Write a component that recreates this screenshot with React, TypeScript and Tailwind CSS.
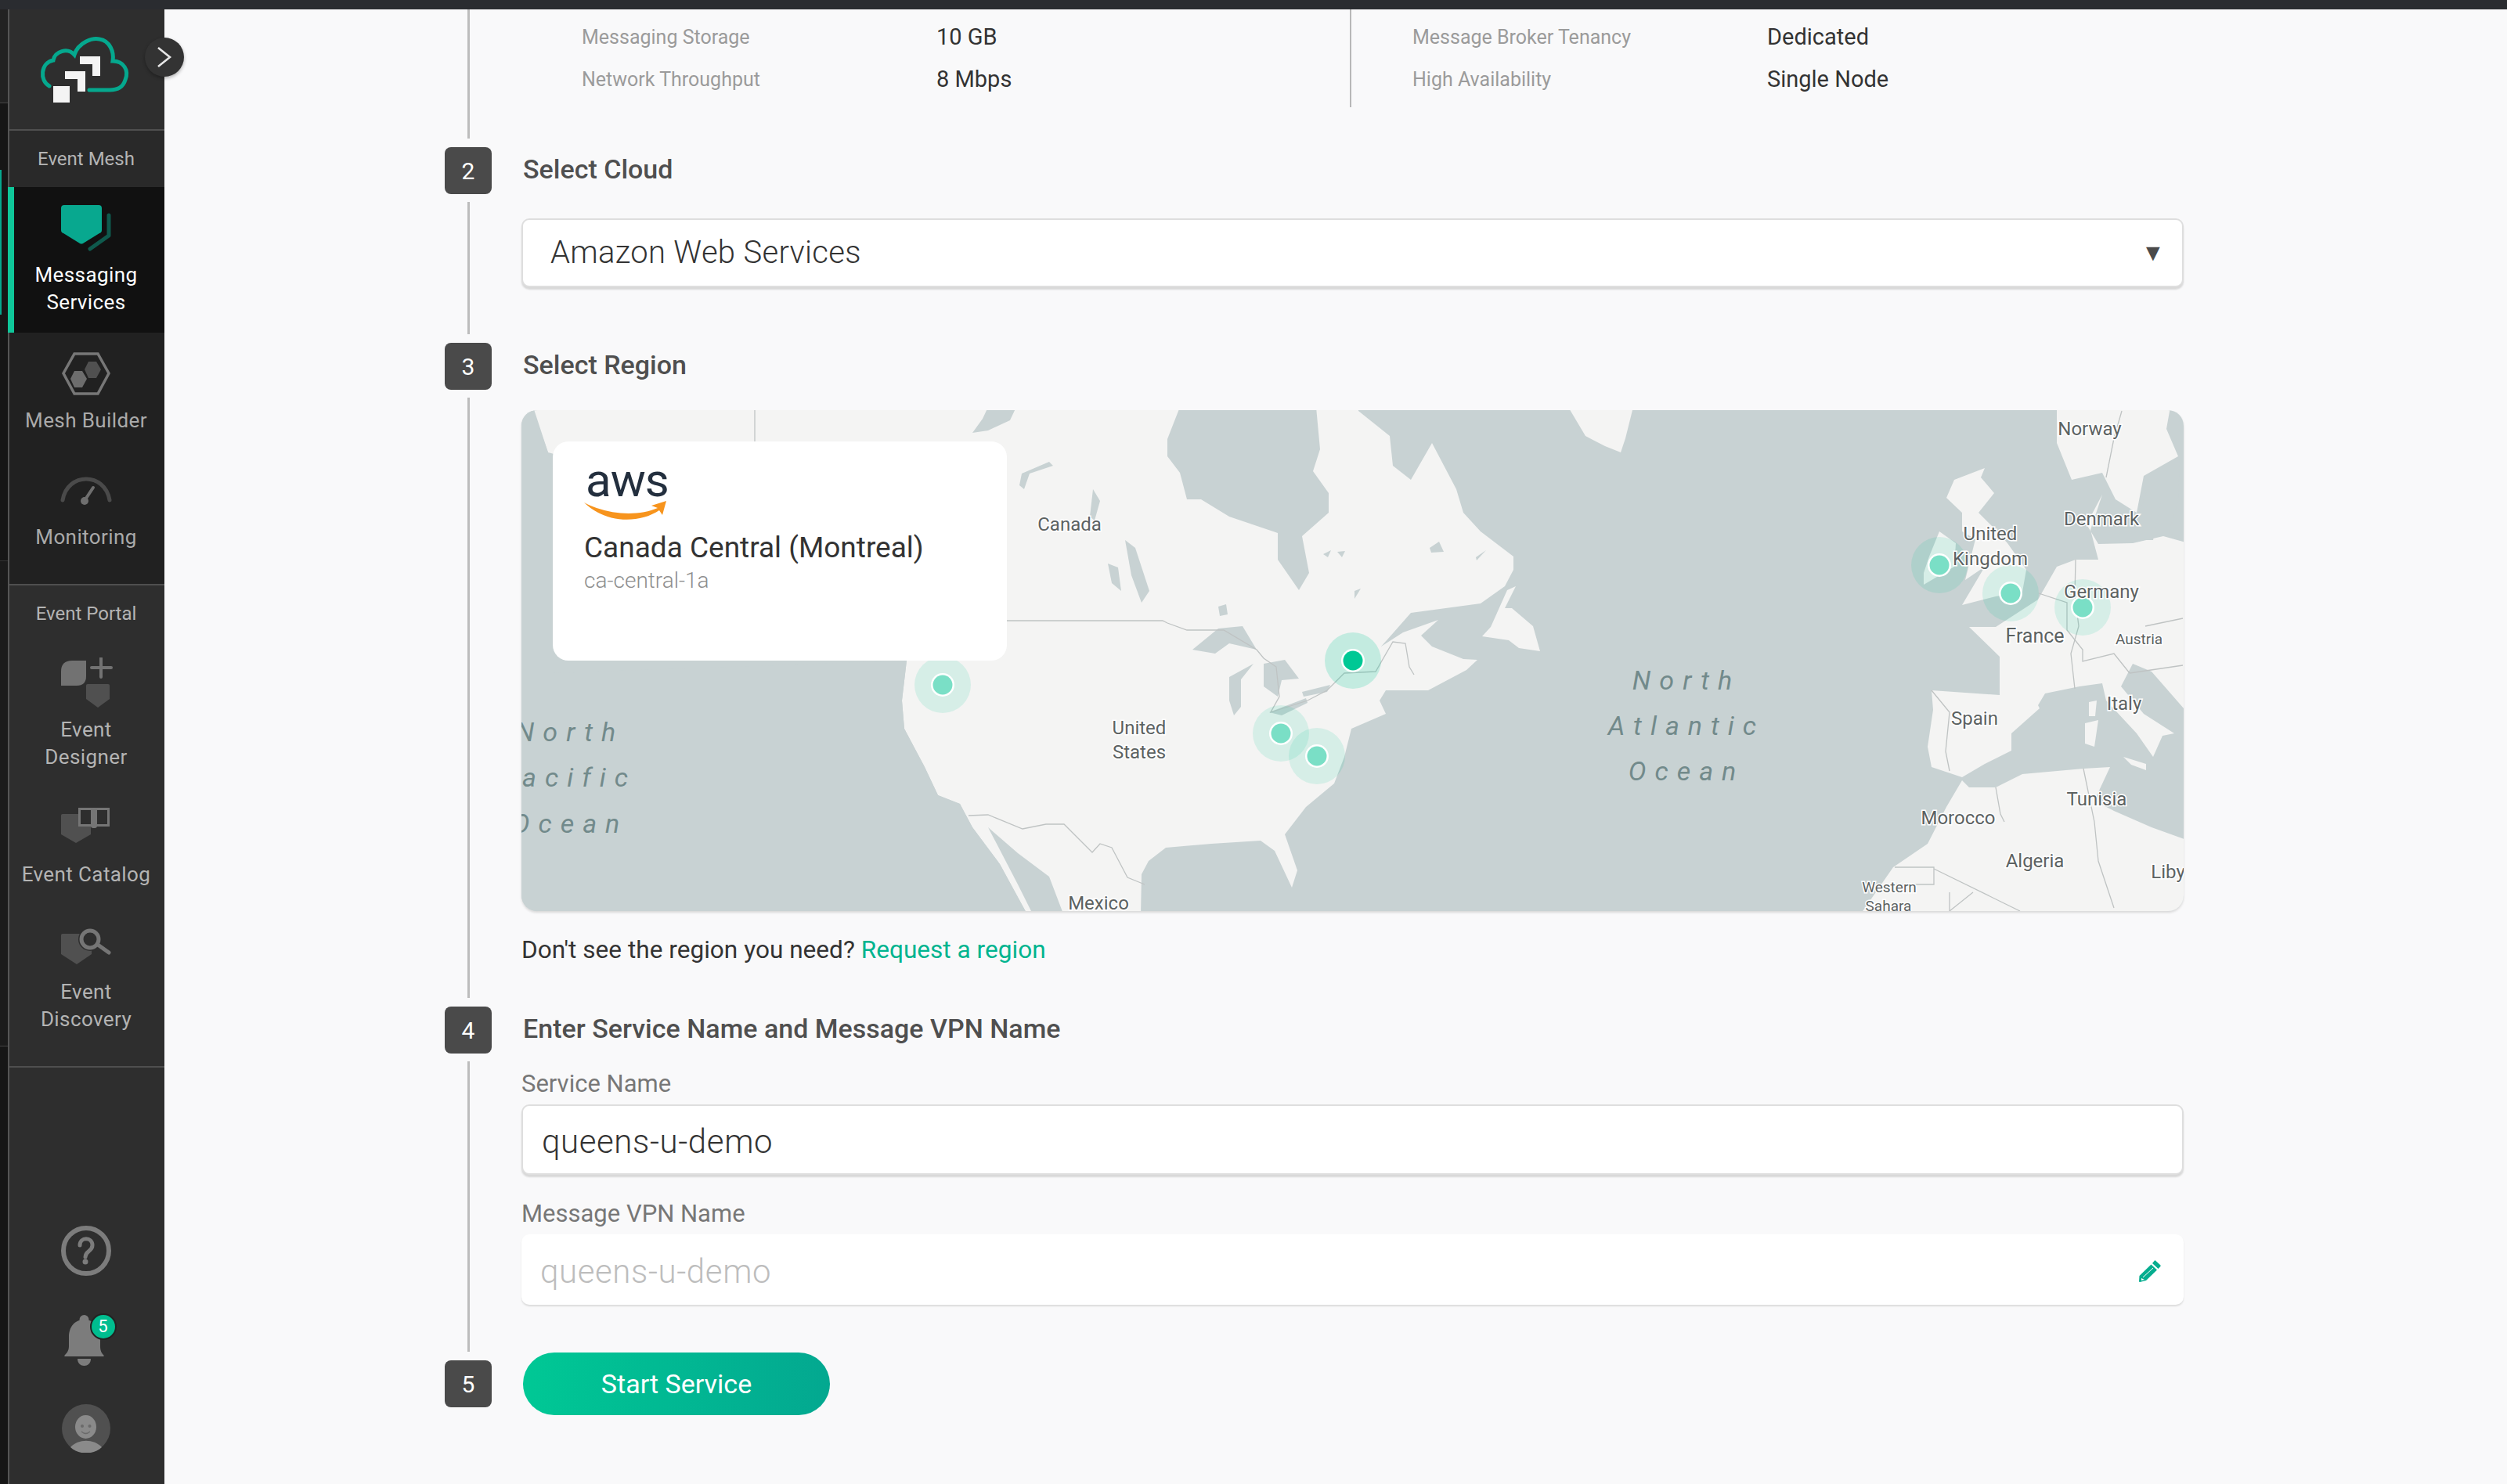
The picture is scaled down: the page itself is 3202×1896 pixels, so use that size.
import React from 'react'

// land outlines are written in page pixels, the map's viewBox starts at 666,524
const land = [
  // north america
  '660,500 1735,500 1735,525 1775,557 1779,595 1802,613 1829,566 1860,625 1869,655 1891,679 1933,711 1933,728 1922,749 1891,771 1802,783 1764,826 1792,808 1837,792 1815,812 1829,826 1869,842 1887,843 1873,856 1824,882 1770,882 1762,895 1770,912 1726,931 1717,967 1704,1001 1668,1031 1641,1066 1657,1112 1650,1134 1628,1087 1610,1074 1547,1078 1489,1083 1467,1100 1458,1117 1457,1170 1359,1170 1340,1120 1300,1090 1262,1057 1300,1130 1320,1170 1313,1170 1277,1104 1242,1057 1226,1027 1198,1016 1181,980 1155,931 1152,895 1158,844 1160,700 700,578 681,525',
  // newfoundland
  '1893,813 1904,801 1925,754 1936,749 1922,777 1931,777 1958,800 1967,832 1940,828 1927,818',
  // greenland
  '2003,520 2025,557 2050,570 2070,578 2076,560 2086,520',
  // ireland
  '2464,711 2477,679 2498,694 2496,724 2457,747 2457,732',
  // great britain
  '2535,598 2496,613 2486,636 2506,655 2506,679 2523,689 2510,741 2535,724 2506,773 2549,762 2583,756 2588,728 2564,694 2544,672 2527,655 2547,630 2530,610',
  // europe
  '2515,801 2549,801 2603,766 2627,724 2651,715 2680,715 2670,677 2685,632 2665,670 2680,695 2724,694 2763,685 2795,694 2795,912 2748,858 2724,848 2709,877 2738,912 2777,937 2762,940 2750,967 2729,937 2690,895 2685,873 2656,877 2612,886 2603,901 2605,905 2569,937 2569,959 2535,976 2506,993 2467,980 2462,954 2469,907 2467,882 2554,888 2554,839',
  // scandinavia
  '2627,520 2627,566 2646,613 2685,604 2702,638 2729,655 2738,608 2782,583 2767,548 2772,520',
  // africa
  '2506,997 2515,1006 2549,1006 2583,989 2661,982 2695,980 2675,1023 2700,1036 2748,1057 2795,1074 2795,1170 2375,1170 2418,1108 2462,1078 2486,1031',
  // sicily, sardinia, corsica
  '2712,967 2741,976 2741,984 2722,977',
  '2663,924 2680,920 2675,954 2663,950',
  '2668,897 2678,895 2676,915 2668,915',
]

const water = [
  // hudson bay
  '1507,520 1681,520 1686,574 1677,602 1697,630 1697,655 1663,685 1672,732 1659,754 1632,715 1632,681 1570,660 1534,638 1516,638 1507,604 1491,583 1491,561',
  // arctic inlet
  '1242,553 1255,535 1262,520 1298,520 1290,537 1262,550',
  '665,520 681,520 700,578 706,600 706,860 1158,844 1152,895 1155,931 1181,980 1198,1016 1226,1027 1242,1057 1277,1104 1313,1170 660,1170',
  // great lakes
  '1523,830 1556,803 1587,800 1605,830 1570,822 1552,835',
  '1570,865 1601,848 1585,868 1585,903 1576,914 1570,895',
  '1614,848 1641,843 1659,867 1637,869 1632,890 1614,877',
  '1621,910 1668,892 1670,898 1637,914',
  '1663,884 1699,875 1695,884 1665,890',
  // prairie lakes and small bodies
  '1305,605 1340,590 1345,595 1315,605 1308,625 1302,620',
  '1437,690 1450,700 1468,755 1458,770 1445,735',
  '1415,720 1428,725 1432,755 1420,745',
  '1396,625 1405,640 1398,665 1392,660',
  '1556,775 1566,772 1568,785 1558,787',
  '1690,708 1700,703 1696,712',
  '1708,705 1718,704 1714,712',
  '1826,700 1838,692 1844,705 1828,706',
  '1885,712 1898,703 1886,716',
  '1730,755 1738,752 1730,765',
  // baltic
  '2730,660 2745,620 2760,640 2750,690 2735,690',
  '2784,583 2795,583 2795,694 2770,680 2782,640',
]

const borders = [
  '1286,793 1485,793 1491,796 1516,805 1563,805 1605,830 1614,841 1630,852 1634,890 1623,910 1670,895 1695,882 1717,860 1757,858 1779,820 1795,822 1800,852 1806,862',
  '964,524 964,564',
  '1237,1042 1262,1041 1306,1059 1336,1053 1359,1053 1395,1089 1405,1078 1420,1083 1440,1121 1462,1130',
  '2604,758 2640,770 2640,805 2660,830 2660,845 2700,835 2720,860',
  '2651,715 2650,760 2655,800 2645,835 2650,880',
  '2467,882 2490,910 2485,960 2490,985',
  '2549,1006 2555,1040 2560,1050',
  '2661,982 2675,1050 2680,1100 2700,1160',
  '2420,1108 2470,1108 2470,1130 2420,1130',
  '2470,1110 2580,1164',
  '2490,1140 2490,1164 2520,1140',
  '2720,860 2788,850',
  '2740,800 2788,790',
  '2690,610 2700,560 2710,525',
]

const placeLabels: [string, number, number, number?][] = [
  ['Canada', 1366, 678],
  ['United', 1455, 938],
  ['States', 1455, 969],
  ['Mexico', 1403, 1162],
  ['Norway', 2669, 556],
  ['Denmark', 2684, 671],
  ['United', 2542, 690],
  ['Kingdom', 2542, 722],
  ['Germany', 2684, 764],
  ['France', 2599, 821, 25],
  ['Austria', 2732, 823, 19],
  ['Italy', 2713, 907],
  ['Spain', 2522, 926],
  ['Tunisia', 2678, 1029],
  ['Morocco', 2501, 1053],
  ['Algeria', 2599, 1108],
  ['Liby', 2769, 1122],
  ['Western', 2413, 1140, 19],
  ['Sahara', 2412, 1164, 19],
]

const oceanLabels: [string, number, number][] = [
  ['North', 728, 947],
  ['acific', 740, 1005],
  ['Ocean', 728, 1064],
  ['North', 2154, 881],
  ['Atlantic', 2154, 939],
  ['Ocean', 2154, 997],
]

const pins: [number, number, boolean][] = [
  [1204, 875, false],
  [1636, 937, false],
  [1682, 966, false],
  [2477, 722, false],
  [2568, 758, false],
  [2660, 776, false],
  [1728, 844, true],
]

const MapDrawing = () => (
  <svg viewBox="666 524 2123 640" className="block w-full h-full">
    <rect x="666" y="524" width="2123" height="640" fill="#c8d2d3" />
    {land.map((p, i) => <polygon key={`land-${i}`} points={p} fill="#f4f4f3" />)}
    {water.map((p, i) => <polygon key={`water-${i}`} points={p} fill="#c8d2d3" />)}
    {borders.map((p, i) => <polyline key={`border-${i}`} points={p} fill="none" stroke="#bfc3c3" strokeWidth="1.3" />)}
    {pins.map(([x, y, active]) => (
      <g key={`${x}-${y}`}>
        <circle cx={x} cy={y} r="36" fill="#00c895" fillOpacity={active ? 0.2 : 0.12} />
        <circle cx={x} cy={y} r="15" fill="#fff" />
        <circle cx={x} cy={y} r="12.5" fill={active ? '#00c895' : '#7adfc6'} />
      </g>
    ))}
    {placeLabels.map(([t, x, y, size]) => (
      <text
        key={`${t}-${x}`}
        x={x}
        y={y}
        textAnchor="middle"
        fontFamily="Roboto, sans-serif"
        fontSize={size ?? 24}
        fill="#5c6262"
        stroke="#ffffff"
        strokeWidth="3"
        paintOrder="stroke"
      >
        {t}
      </text>
    ))}
    {oceanLabels.map(([t, x, y]) => (
      <text
        key={`${t}-${x}-${y}`}
        x={x}
        y={y}
        textAnchor="middle"
        fontFamily="Roboto, sans-serif"
        fontStyle="italic"
        fontSize="34"
        letterSpacing="11"
        fill="#728a8b"
      >
        {t}
      </text>
    ))}
  </svg>
)

const AwsLogo = () => (
  <div className="flex flex-col items-start">
    <span className="h-[40px] ml-[2px] text-[60px] leading-[40px] font-normal tracking-[-1px] text-[#232f3e]">aws</span>
    <svg viewBox="746 640 106 24" className="w-[106px] h-[24px] mt-[6px]">
      <path d="M746 642 C775 658 815 660 840 649 L832 646 L851 640 L846 658 L842 652 C815 670 772 668 746 642 Z" fill="#f7941d" />
    </svg>
  </div>
)

const Logo = () => (
  <svg viewBox="50 46 118 92" className="w-[118px] h-[92px]">
    <path
      d="M63 112 C50 105 52 82 68 79 C70 68 86 62 95 72 C100 56 118 50 127 52 C140 54 146 68 144 80 C158 80 165 92 160 104 C157 114 150 117 140 117 L114 117"
      fill="none"
      stroke="#05a88e"
      strokeWidth="5"
      strokeLinecap="round"
    />
    <rect x="68" y="112" width="21" height="21" fill="#f4f4f4" />
    <path d="M83 93 H109 V119 H99 V103 H83 Z" fill="#f4f4f4" />
    <path d="M102 74 H128 V99 H118 V84 H102 Z" fill="#f4f4f4" />
  </svg>
)

const MessagingIcon = () => (
  <svg viewBox="76 260 68 62" className="w-[68px] h-[62px]">
    <path d="M82 262 H126 Q130 262 130 266 V294 Q130 297 127 298 L106 311 Q104 312 102 311 L81 298 Q78 297 78 294 V266 Q78 262 82 262 Z" fill="#08a88f" />
    <path d="M139 275 V301 L115 318" fill="none" stroke="#0f5a4d" strokeWidth="5" strokeLinecap="round" strokeLinejoin="round" />
  </svg>
)

const MeshIcon = () => (
  <svg viewBox="76 448 68 59" className="w-[68px] h-[59px]">
    <polygon points="95,452 125,452 139,477 125,503 95,503 81,477" fill="none" stroke="#777" strokeWidth="3.5" />
    <polygon points="95,474 105,474 111,484 105,495 95,495 90,484" fill="#6d6d6d" />
    <polygon points="113,462 123,462 129,472 123,483 113,483 108,472" fill="#505050" />
  </svg>
)

const GaugeIcon = () => (
  <svg viewBox="76 606 68 40" className="w-[68px] h-[40px]">
    <path d="M80 639 C86 603 134 603 140 639" fill="none" stroke="#4a4a4a" strokeWidth="5" strokeLinecap="round" />
    <path d="M109 638 L119 623" stroke="#6f6f6f" strokeWidth="4" strokeLinecap="round" />
    <circle cx="108" cy="640" r="5" fill="#6f6f6f" />
  </svg>
)

const DesignerIcon = () => (
  <svg viewBox="76 840 68 66" className="w-[68px] h-[66px]">
    <path d="M92 844 H110 V864 Q110 876 98 876 H78 V858 Q78 844 92 844 Z" fill="#727272" />
    <path d="M117 853 H142 M129 841 V865" stroke="#727272" strokeWidth="4" strokeLinecap="round" />
    <path d="M112 874 H138 Q140 874 140 876 V893 L125 904 L110 893 V876 Q110 874 112 874 Z" fill="#505050" />
  </svg>
)

const CatalogIcon = () => (
  <svg viewBox="76 1030 68 49" className="w-[68px] h-[49px]">
    <path d="M80 1040 H116 V1066 L97 1077 L78 1066 V1042 Q78 1040 80 1040 Z" fill="#505050" />
    <rect x="101.5" y="1033.5" width="17" height="21" fill="#2e2e2e" stroke="#757575" strokeWidth="3" />
    <rect x="121.5" y="1033.5" width="17" height="21" fill="#2e2e2e" stroke="#757575" strokeWidth="3" />
    <rect x="116" y="1032" width="8" height="26" rx="3" fill="#757575" />
  </svg>
)

const DiscoveryIcon = () => (
  <svg viewBox="76 1184 68 50" className="w-[68px] h-[50px]">
    <path d="M80 1193 H117 V1219 L98 1232 L78 1219 V1195 Q78 1193 80 1193 Z" fill="#505050" />
    <circle cx="115" cy="1200" r="15" fill="#2e2e2e" />
    <circle cx="115" cy="1200" r="11" fill="#2e2e2e" stroke="#757575" strokeWidth="5" />
    <path d="M125 1207 L139 1217" stroke="#757575" strokeWidth="5" strokeLinecap="round" />
  </svg>
)

const HelpIcon = () => (
  <svg viewBox="76 1564 68 68" className="w-[68px] h-[68px]">
    <circle cx="110" cy="1598" r="29" fill="none" stroke="#7c7c7c" strokeWidth="6" />
    <path d="M102 1591 C102 1580 118 1580 118 1591 C118 1599 109 1598 109 1606" fill="none" stroke="#7c7c7c" strokeWidth="5" strokeLinecap="round" />
    <circle cx="109" cy="1612" r="3.5" fill="#7c7c7c" />
  </svg>
)

const BellIcon = () => (
  <svg viewBox="80 1678 60 68" className="w-[60px] h-[68px]">
    <circle cx="108.5" cy="1686" r="6" fill="#7c7c7c" />
    <path d="M108.5 1686 C96 1686 89 1696 89 1708 V1720 C89 1726 86 1729 84 1731 Q82 1733 85 1733 H132 Q135 1733 133 1731 C131 1729 129 1726 129 1720 V1708 C129 1696 121 1686 108.5 1686 Z" fill="#7c7c7c" />
    <path d="M100 1736 H117 C117 1748 100 1748 100 1736 Z" fill="#7c7c7c" />
  </svg>
)

const AvatarIcon = () => (
  <svg viewBox="78 1794 64 62" className="w-[64px] h-[62px]">
    <circle cx="110" cy="1825" r="31" fill="#505050" />
    <ellipse cx="109.5" cy="1823" rx="13.5" ry="15" fill="#8a8a8a" />
    <circle cx="105" cy="1822" r="2" fill="#6a6a6a" />
    <circle cx="114.5" cy="1822" r="2" fill="#6a6a6a" />
    <path d="M104 1829 Q109.5 1834 115 1829" fill="none" stroke="#6a6a6a" strokeWidth="1.2" />
    <path d="M90 1849 C100 1838 120 1838 130 1849 C120 1859 100 1859 90 1849 Z" fill="#8a8a8a" />
  </svg>
)

const NavLabel = ({ children, className = '' }: { children: React.ReactNode; className?: string }) => (
  <div className={`text-[26px] leading-[35px] tracking-[0.4px] text-center ${className}`}>{children}</div>
)

const Sidebar = () => (
  <aside className="relative flex h-full shrink-0">
    <div className="flex flex-col w-[12px] border-r-2 border-[#555] bg-[#161616]">
      <div className="h-[120px] bg-[#222] border-b border-[#444]" />
      <div className="relative h-[585px] border-b border-[#333]">
        <div className="absolute left-0 top-[85px] w-[2px] h-[185px] bg-[#05a88e]" />
      </div>
      <div className="h-[620px] bg-[#1b1b1b] border-b border-[#444]" />
    </div>
    <div className="flex flex-col w-[198px] bg-[#2e2e2e] text-[#b4b4b4]">
      <div className="flex h-[155px] shrink-0 items-center justify-center pr-[2px] border-b-2 border-[#4f4f4f]">
        <div className="mt-[2px] pr-[2px]"><Logo /></div>
      </div>

      <div className="h-[72px] shrink-0 flex items-center justify-center pr-[2px] bg-[#292929] text-[24px]">Event Mesh</div>
      <div className="flex flex-col items-center h-[186px] shrink-0 -ml-[2px] border-l-[8px] border-[#0fc79a] pr-[8px] pt-[21px] bg-[#111] text-white">
        <MessagingIcon />
        <NavLabel className="mt-[12px]">Messaging<br />Services</NavLabel>
      </div>
      <div className="flex flex-col items-center h-[321px] shrink-0 pr-[2px] pt-[23px] bg-[#212121] text-[#aaa]">
        <MeshIcon />
        <NavLabel className="mt-[13px]">Mesh Builder</NavLabel>
        <div className="mt-[51px]"><GaugeIcon /></div>
        <NavLabel className="mt-[23px]">Monitoring</NavLabel>
      </div>

      <div className="flex flex-col items-center shrink-0 h-[616px] pr-[2px] border-t-2 border-[#4f4f4f]">
        <div className="h-[72px] flex items-center text-[24px]">Event Portal</div>
        <div className="mt-[20px]"><DesignerIcon /></div>
        <NavLabel className="mt-[9px]">Event<br />Designer</NavLabel>
        <div className="mt-[45px]"><CatalogIcon /></div>
        <NavLabel className="mt-[21px]">Event Catalog</NavLabel>
        <div className="mt-[49px]"><DiscoveryIcon /></div>
        <NavLabel className="mt-[16px]">Event<br />Discovery</NavLabel>
      </div>

      <div className="flex flex-1 flex-col items-center pr-[2px] border-t-2 border-[#4f4f4f]">
        <div className="mt-[200px]"><HelpIcon /></div>
        <div className="relative mt-[46px] ml-[-3px]">
          <BellIcon />
          <div className="absolute left-[36px] top-0 w-[34px] h-[34px] flex items-center justify-center rounded-full bg-[#00bd8f] border-2 border-[#222] text-white text-[22px] leading-none">5</div>
        </div>
        <div className="mt-[48px]"><AvatarIcon /></div>
      </div>
    </div>
    {/* collapse toggle sits over the sidebar edge */}
    <button className="absolute left-[185px] top-[36px] flex w-[50px] h-[50px] items-center justify-center rounded-full bg-[#333] shadow-[0_2px_4px_rgba(0,0,0,0.3)]">
      <svg viewBox="0 0 20 28" className="w-[20px] h-[28px]">
        <polyline points="2,2 17,14 2,26" fill="none" stroke="#e6e6e6" strokeWidth="2.6" />
      </svg>
    </button>
  </aside>
)

const StepBadge = ({ n }: { n: number }) => (
  <div className="flex h-[60px] w-[60px] shrink-0 items-center justify-center rounded-[8px] bg-[#4a4a4a] text-[30px] text-white">{n}</div>
)

const Rail = ({ className = '' }: { className?: string }) => <div className={`w-[3px] bg-[#bcbcbc] ${className}`} />

const Heading = ({ children }: { children: React.ReactNode }) => (
  <h2 className="h-[60px] pl-[2px] pb-[3px] flex items-center text-[34px] font-medium text-[#4f4f4f]">{children}</h2>
)

const Step = ({ n, height, children }: { n: number; height: string; children: React.ReactNode }) => (
  <section className={`flex ${height}`}>
    <div className="flex w-[60px] shrink-0 flex-col items-center">
      <StepBadge n={n} />
      <Rail className="flex-1 mt-[10px] mb-[11px]" />
    </div>
    <div className="ml-[38px] flex-1">{children}</div>
  </section>
)

const SpecRow = ({ label, value }: { label: string; value: string }) => (
  <div className="flex h-[54px] items-center">
    <span className="w-[453px] text-[25px] text-[#9b9b9b]">{label}</span>
    <span className="text-[29px] text-[#333]">{value}</span>
  </div>
)

const inputBox = 'flex items-center bg-white rounded-[10px] border-2 border-[#dedede] shadow-[0_3px_2px_#d8d8d8]'

const App: React.FC = () => {
  return (
    <div className="flex flex-col w-[3202px] h-[1896px] overflow-hidden bg-[#f9f9fa] font-['Roboto',sans-serif]">
      <div className="h-[12px] shrink-0 bg-[#2a2c30]" />
      <div className="flex flex-1 min-h-0">
        <Sidebar />
        <main className="flex-1 min-w-0 pl-[358px]">
          <div className="w-[2221px]">
            {/* end of step 1, the plan summary */}
            <div className="flex h-[176px]">
              <div className="flex w-[60px] shrink-0 justify-center"><Rail className="mb-[11px]" /></div>
              <div className="ml-[38px] flex-1 flex">
                <div className="w-[1060px] h-[125px] pl-[77px] pt-[9px] border-r-2 border-[#b8b8b8]">
                  <SpecRow label="Messaging Storage" value="10 GB" />
                  <SpecRow label="Network Throughput" value="8 Mbps" />
                </div>
                <div className="pl-[78px] pt-[9px]">
                  <SpecRow label="Message Broker Tenancy" value="Dedicated" />
                  <SpecRow label="High Availability" value="Single Node" />
                </div>
              </div>
            </div>

            <Step n={2} height="h-[250px]">
              <Heading>Select Cloud</Heading>
              <div className={`${inputBox} relative mt-[31px] h-[88px] pl-[35px] text-[40px] font-light tracking-[0.3px] text-[#333]`}>
                Amazon Web Services
                <span className="absolute right-[22px] top-[22px] text-[30px] leading-[40px] text-[#4a4a4a]">▼</span>
              </div>
            </Step>

            <Step n={3} height="h-[848px]">
              <Heading>Select Region</Heading>
              <div className="relative mt-[26px] h-[640px] overflow-hidden rounded-[20px] shadow-[0_2px_3px_#d8d8d8]">
                <MapDrawing />
                <div className="absolute left-[40px] top-[40px] w-[580px] h-[280px] rounded-[20px] bg-white pl-[40px] pt-[30px]">
                  <AwsLogo />
                  <div className="mt-[14px] text-[37px] leading-[44px] text-[#333]">Canada Central (Montreal)</div>
                  <div className="mt-[4px] text-[28px] leading-[32px] font-light text-[#8e8e8e]">ca-central-1a</div>
                </div>
              </div>
              <p className="mt-[32px] text-[31.6px] leading-[36px] text-[#333]">
                Don't see the region you need? <span className="text-[#00b48f]">Request a region</span>
              </p>
            </Step>

            <Step n={4} height="h-[452px]">
              <Heading>Enter Service Name and Message VPN Name</Heading>
              <label className="block mt-[21px] text-[31px] leading-[36px] text-[#777]">Service Name</label>
              <div className={`${inputBox} mt-[8px] h-[90px] pl-[24px] pt-[4px] text-[42px] font-light tracking-[0.6px] text-[#333]`}>queens-u-demo</div>
              <label className="block mt-[32px] text-[31px] leading-[36px] text-[#777]">Message VPN Name</label>
              <div className="flex items-center justify-between mt-[8px] h-[90px] pl-[24px] pr-[29px] pt-[4px] rounded-[10px] bg-white shadow-[0_2px_2px_#dcdcdc] text-[42px] font-light tracking-[0.6px] text-[#bdbdbd]">
                queens-u-demo
                <svg viewBox="0 0 28 28" className="w-[28px] h-[28px]">
                  <path d="M21 0.5 L27.5 6.5 Q28 7.5 27 8.5 L24.5 11 L17 4 L19.5 1 Q20 0 21 0.5 Z M15.5 5.5 L23 12.5 L9 26 L1 28 L0 27.5 L0.5 20 Z" fill="#05ad8f" />
                  <path d="M5 22 L18 10" stroke="#fff" strokeWidth="1" />
                  <path d="M3 23 L7 25 L3 26 Z" fill="#fff" />
                </svg>
              </div>
            </Step>

            <section className="flex items-center h-[60px]">
              <StepBadge n={5} />
              <button className="ml-[40px] h-[80px] w-[392px] rounded-full bg-gradient-to-r from-[#00c895] to-[#03a890] text-[34px] text-white">Start Service</button>
            </section>
          </div>
        </main>
      </div>
    </div>
  )
}

export default App
